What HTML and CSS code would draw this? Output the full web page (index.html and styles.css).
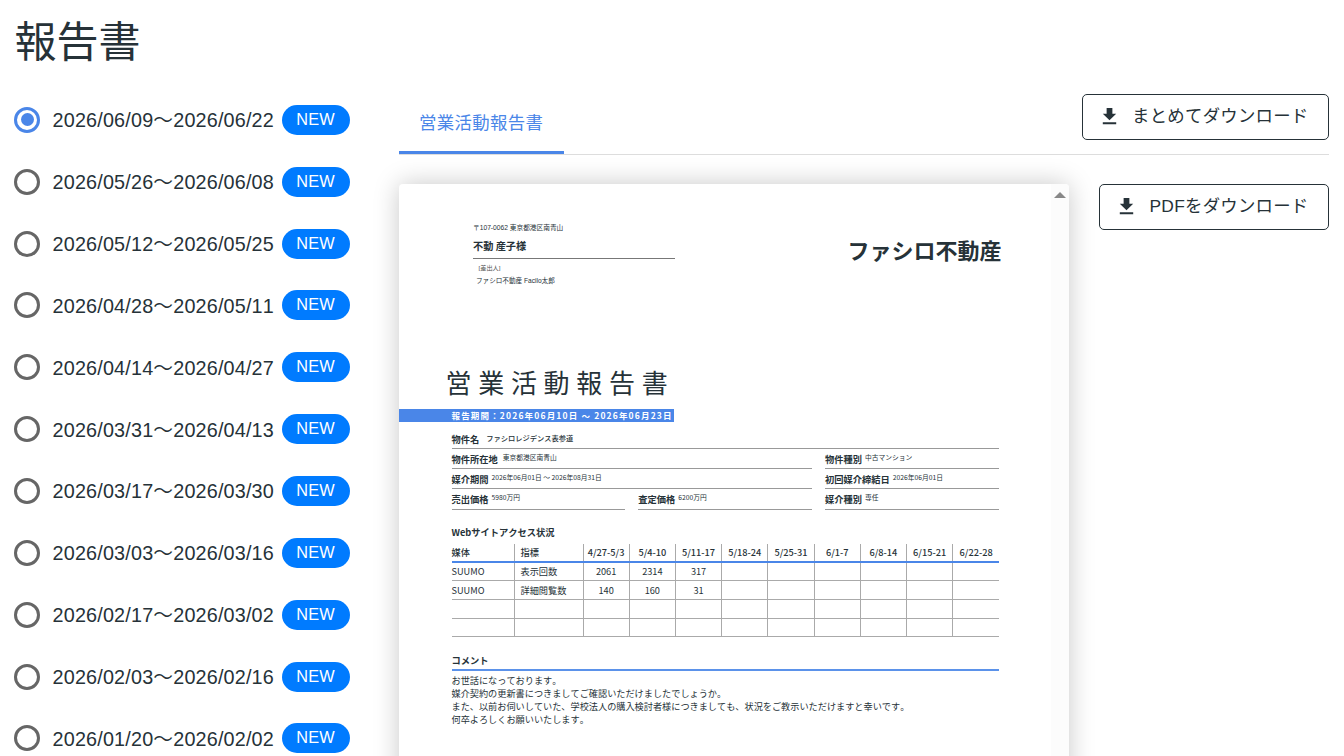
FILE: index.html
```html
<!DOCTYPE html>
<html lang="ja">
<head>
    <meta charset="UTF-8">
    <meta name="viewport" content="width=device-width, initial-scale=1.0">
    <title>報告書</title>
    <link rel="stylesheet" href="styles.css">
</head>
<body>
    <h1 class="page-title">報告書</h1>
    <div class="layout">
        <div class="periods" id="periods"></div>

        <main class="main">
            <div class="toolbar">
                <div class="tab active">営業活動報告書</div>
                <button class="btn">
                    <svg class="icon" viewBox="0 0 24 24"><path d="M5 20h14v-2H5v2zM19 9h-4V3H9v6H5l7 7 7-7z"/></svg>
                    まとめてダウンロード
                </button>
            </div>

            <div class="content">
                <div class="viewer">
                    <div class="scrollbar"><span class="arrow"></span></div>
                    <div class="paper">
                        <div class="letterhead">
                            <div class="recipient">
                                <div class="address">〒107-0062 東京都港区南青山</div>
                                <div class="name">不動 産子様</div>
                                <div class="sender-label">[差出人]</div>
                                <div class="sender">ファシロ不動産 Facilo太郎</div>
                            </div>
                            <div class="company">ファシロ不動産</div>
                        </div>

                        <h2 class="report-title">営業活動報告書</h2>
                        <div class="report-period">報告期間：2026年06月10日 〜 2026年06月23日</div>

                        <div class="info">
                            <div class="field full"><b>物件名</b><span class="strong">ファシロレジデンス表参道</span></div>
                            <div class="field wide"><b>物件所在地</b><span class="spaced">東京都港区南青山</span></div>
                            <div class="field"><b>物件種別</b><span>中古マンション</span></div>
                            <div class="field wide"><b>媒介期間</b><span>2026年06月01日 〜 2026年08月31日</span></div>
                            <div class="field"><b>初回媒介締結日</b><span>2026年06月01日</span></div>
                            <div class="field"><b>売出価格</b><span>5980万円</span></div>
                            <div class="field"><b>査定価格</b><span>6200万円</span></div>
                            <div class="field"><b>媒介種別</b><span>専任</span></div>
                        </div>

                        <h3 class="section-title">Webサイトアクセス状況</h3>
                        <table class="access">
                            <thead>
                                <tr>
                                    <th class="media">媒体</th><th class="metric">指標</th>
                                    <th>4/27-5/3</th><th>5/4-10</th><th>5/11-17</th><th>5/18-24</th><th>5/25-31</th>
                                    <th>6/1-7</th><th>6/8-14</th><th>6/15-21</th><th>6/22-28</th>
                                </tr>
                            </thead>
                            <tbody>
                                <tr><td>SUUMO</td><td>表示回数</td><td>2061</td><td>2314</td><td>317</td><td></td><td></td><td></td><td></td><td></td><td></td></tr>
                                <tr><td>SUUMO</td><td>詳細閲覧数</td><td>140</td><td>160</td><td>31</td><td></td><td></td><td></td><td></td><td></td><td></td></tr>
                                <tr><td></td><td></td><td></td><td></td><td></td><td></td><td></td><td></td><td></td><td></td><td></td></tr>
                                <tr><td></td><td></td><td></td><td></td><td></td><td></td><td></td><td></td><td></td><td></td><td></td></tr>
                            </tbody>
                        </table>

                        <h3 class="section-title comment-title">コメント</h3>
                        <p class="comment">お世話になっております。<br>媒介契約の更新書につきましてご確認いただけましたでしょうか。<br>また、以前お伺いしていた、学校法人の購入検討者様につきましても、状況をご教示いただけますと幸いです。<br>何卒よろしくお願いいたします。</p>
                    </div>
                </div>
                <button class="btn">
                    <svg class="icon" viewBox="0 0 24 24"><path d="M5 20h14v-2H5v2zM19 9h-4V3H9v6H5l7 7 7-7z"/></svg>
                    PDFをダウンロード
                </button>
            </div>
        </main>
    </div>
    <script src="script.js"></script>
</body>
</html>
```
FILE: styles.css
```css
* {
    box-sizing: border-box;
}

body {
    margin: 0;
    height: 756px;
    overflow: hidden;
    background: #fff;
    color: #263238;
    font-family: "Liberation Sans", "Noto Sans CJK JP", sans-serif;
    font-kerning: none;
}

.page-title {
    margin: 0;
    padding: 12px 0 0 14.5px;
    height: 89px;
    font-size: 42px;
    font-weight: 400;
    line-height: 62px;
}

.layout {
    display: flex;
    height: 667px;
    overflow: hidden;
}

/* period list */
.periods {
    width: 399px;
    padding-left: 14px;
}

.period {
    display: flex;
    align-items: center;
    height: 61.85px;
    white-space: nowrap;
}

.range {
    width: 222px;
    padding-bottom: 2px;
    font-size: 19.8px;
    letter-spacing: 0.17px;
}

.radio {
    display: flex;
    align-items: center;
    justify-content: center;
    width: 26px;
    height: 26px;
    margin-right: 12.6px;
    border: 3px solid #666;
    border-radius: 50%;
}

.period.selected .radio {
    border-color: #4a86e8;
}

.period.selected .radio::after {
    content: "";
    width: 13px;
    height: 13px;
    border-radius: 50%;
    background: #4a86e8;
}

.badge {
    width: 68px;
    height: 30px;
    margin-left: 7px;
    border-radius: 15px;
    background: #007bff;
    color: #fff;
    font-size: 16.3px;
    letter-spacing: 0.2px;
    line-height: 29px;
    text-align: center;
}

/* tabs and buttons */
.main {
    width: 930px;
}

.toolbar {
    display: flex;
    align-items: flex-start;
    justify-content: space-between;
    height: 66px;
    border-bottom: 1px solid #ddd;
}

.tab {
    height: 65px;
    padding: 0 20.5px 0 20px;
    border-bottom: 3px solid #4a86e8;
    color: #4a86e8;
    font-size: 17.4px;
    letter-spacing: 0.38px;
    line-height: 68px;
}

.btn {
    display: flex;
    align-items: center;
    height: 46px;
    margin-top: 5px;
    padding: 0 19.5px 3px 15px;
    border: 1.5px solid #263238;
    border-radius: 5px;
    background: #fff;
    color: #263238;
    font-family: inherit;
    font-size: 17.4px;
    letter-spacing: 0.25px;
    line-height: 24px;
    white-space: nowrap;
}

.icon {
    width: 23px;
    height: 23px;
    margin: 1px 11.5px 0 0;
    fill: #263238;
}

.content {
    display: flex;
    align-items: flex-start;
    justify-content: space-between;
    padding-top: 29px;
}

.content .btn {
    margin-top: 0;
}

/* document preview */
.viewer {
    position: relative;
    width: 670px;
    height: 640px;
    border-radius: 4px;
    background: #fff;
    box-shadow: 0 0 26px rgba(0, 0, 0, 0.22);
}

.scrollbar {
    position: absolute;
    top: 0;
    right: 0;
    width: 18px;
    height: 100%;
    border-radius: 0 4px 4px 0;
    background: #fcfcfc;
}

.arrow {
    display: block;
    width: 12px;
    margin: 8px 0 0 3px;
    border: 6px solid transparent;
    border-top: 0;
    border-bottom-color: #888;
}

.paper {
    padding: 39px 70px 0 52.5px;
    font-family: "Noto Sans CJK JP", sans-serif;
    font-size: 9.15px;
}

.letterhead {
    display: flex;
    justify-content: space-between;
    height: 142px;
    padding-left: 21.5px;
}

.recipient {
    width: 202px;
    font-size: 6.7px;
    line-height: 10px;
}

.address,
.sender-label,
.sender {
    font-family: "Liberation Sans", "Noto Sans CJK JP", sans-serif;
}

.name {
    height: 26px;
    border-bottom: 1.5px solid #777;
    font-size: 10.2px;
    font-weight: 700;
    line-height: 26px;
}

.sender-label {
    margin-top: 4px;
    padding-left: 5.5px;
    color: #555;
    font-size: 6.2px;
    line-height: 9px;
}

.sender {
    margin-top: 4px;
    padding-left: 3px;
    font-size: 6.6px;
}

.company {
    margin-right: -2.5px;
    padding-top: 10px;
    font-size: 22px;
    font-weight: 700;
    line-height: 32px;
}

.report-title {
    margin: 0 0 0 -6px;
    height: 44px;
    font-size: 26px;
    font-weight: 400;
    letter-spacing: 6.7px;
    line-height: 33px;
}

.report-period {
    width: 275px;
    height: 13px;
    margin-left: -52.5px;
    padding-left: 52.5px;
    background: #4a86e8;
    color: #fff;
    font-size: 8.5px;
    font-weight: 700;
    letter-spacing: 1.17px;
    line-height: 13px;
    white-space: nowrap;
}

.info {
    display: grid;
    grid-template-columns: repeat(3, 1fr);
    grid-auto-rows: 20.3px;
    column-gap: 12.8px;
    padding-top: 6.5px;
}

.field {
    display: flex;
    border-bottom: 1px solid #999;
    font-size: 9.25px;
    line-height: 20px;
    white-space: nowrap;
}

.field span {
    margin-left: 3px;
    font-size: 6.75px;
    line-height: 17.5px;
}

.field .strong {
    margin-left: 7px;
    font-size: 7.25px;
    font-weight: 500;
    line-height: 19px;
}

.field .spaced {
    margin-left: 5px;
}

.full {
    grid-column: span 3;
}

.wide {
    grid-column: span 2;
}

.section-title {
    margin: 15px 0 5px;
    font-size: 9.25px;
    line-height: 14px;
}

.access {
    width: 547.5px;
    border-collapse: collapse;
    table-layout: fixed;
    font-size: 9.2px;
    line-height: 13px;
}

.access th,
.access td {
    height: 18.6px;
    padding: 0;
    border: 1px solid #aaa;
    text-align: center;
}

.access th {
    border-top: 0;
    border-bottom: 2px solid #4a86e8;
    font-weight: 500;
}

.access th:first-child,
.access td:first-child {
    border-left: 0;
    text-align: left;
}

.access th:last-child,
.access td:last-child {
    border-right: 0;
}

.access th:nth-child(2),
.access td:nth-child(2) {
    padding-left: 6px;
    text-align: left;
}

.access .media {
    width: 62.5px;
}

.access .metric {
    width: 69px;
}

.comment-title {
    margin: 15px 0 3px;
    padding-bottom: 1px;
    border-bottom: 2px solid #5b92ea;
    line-height: 16px;
}

.comment {
    margin: 0;
    font-size: 9.17px;
    line-height: 13px;
    white-space: nowrap;
}
```
FILE: script.js
```javascript
const periods = [
    ["2026/06/09", "2026/06/22"],
    ["2026/05/26", "2026/06/08"],
    ["2026/05/12", "2026/05/25"],
    ["2026/04/28", "2026/05/11"],
    ["2026/04/14", "2026/04/27"],
    ["2026/03/31", "2026/04/13"],
    ["2026/03/17", "2026/03/30"],
    ["2026/03/03", "2026/03/16"],
    ["2026/02/17", "2026/03/02"],
    ["2026/02/03", "2026/02/16"],
    ["2026/01/20", "2026/02/02"]
];

const list = document.getElementById("periods");

const render = (selected) => {
    list.innerHTML = periods.map(([from, to], i) => `
        <div class="period ${i === selected ? "selected" : ""}" data-index="${i}">
            <span class="radio"></span><span class="range">${from}〜${to}</span><span class="badge">NEW</span>
        </div>`).join("");
};

list.addEventListener("click", (e) => {
    const row = e.target.closest(".period");
    if (row) render(Number(row.dataset.index));
});

render(0);
```
